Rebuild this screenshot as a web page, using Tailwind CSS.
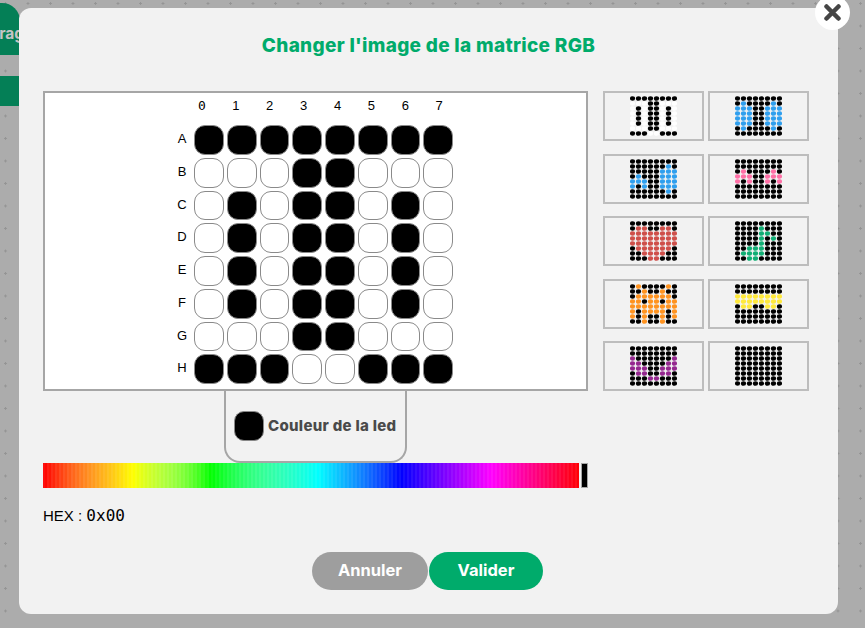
<!doctype html>
<html>

<head>
    <meta charset="UTF-8">
    <meta name="viewport" content="width=device-width, initial-scale=1.0">
    <script src="https://cdn.jsdelivr.net/npm/@tailwindcss/browser@4"></script>
</head>

<body class="font-['Inter',sans-serif]">
    <div class="relative w-[865px] h-[628px] overflow-hidden bg-[#acacac]">
        <!-- workspace dots behind the modal -->
        <svg class="absolute inset-0" width="865" height="628">
            <defs>
                <pattern id="plus" x="4" y="2" width="22.5" height="22.5" patternUnits="userSpaceOnUse">
                    <path d="M0 1.5h3M1.5 0v3" stroke="#949494" stroke-width="1" />
                </pattern>
            </defs>
            <rect width="865" height="628" fill="url(#plus)" />
        </svg>
        <div class="absolute left-[-20px] top-[3px] w-[40px] h-[52px] rounded-t-[18px] bg-[#047f56] text-[#c4c4c4] text-[15.5px] font-bold leading-[62px] pl-[8px]">Drag</div>
        <div class="absolute left-0 top-[76px] w-[30px] h-[30px] bg-[#047f56]"></div>

        <!-- modal -->
        <div class="absolute left-[19px] top-[8px] w-[819px] h-[606px] rounded-xl bg-[#f2f2f2] pl-[24px]">
            <h1 class="h-[83px] pt-[26px] pr-[24px] text-center text-[19px] leading-[24px] font-extrabold tracking-[0.3px] text-[#00ab6b]">Changer l'image de la matrice RGB</h1>

            <div class="flex gap-[15px]">
                <div class="w-[545px]">
                    <div class="h-[300px] border-2 border-[#a6a6a6] bg-white pl-[127px] pt-[3px] font-['Liberation_Sans',sans-serif] text-[13px] text-black">
                        <div id="header" class="flex h-[29px] ml-[13px] leading-[20px]"></div>
                        <div id="matrix" class="grid grid-cols-[19px_repeat(8,29.75px)] gap-[3px]"></div>
                    </div>
                    <div class="ml-[181px] w-[183px] h-[72px] flex items-start gap-[4px] pl-[8px] pt-[20px] border-2 border-t-0 border-[#a6a6a6] rounded-b-[16px]">
                        <div class="w-[30px] h-[30px] rounded-[10px] bg-black border border-[#888]"></div>
                        <span class="text-[15px] leading-[30px] font-extrabold tracking-[0.3px] text-[#4a4a4a] whitespace-nowrap">Couleur de la led</span>
                    </div>
                    <div class="flex h-[25px] gap-[3px]">
                        <div id="spectrum" class="flex w-[536px] h-full"></div>
                        <div class="w-[7px] h-full bg-black border border-[#a6a6a6]"></div>
                    </div>
                    <p class="mt-[18px] text-[15px] leading-[20px] text-black font-['Liberation_Sans',sans-serif]">HEX : <span class="font-['DejaVu_Sans_Mono',monospace] text-[16px]">0x00</span></p>
                </div>

                <div id="thumbs" class="w-[206px] h-[300px] grid grid-cols-[101px_101px] gap-x-[4px] content-between"></div>
            </div>

            <div class="flex justify-center mt-[26px] pr-[26px] gap-[1px]">
                <button class="w-[116px] h-[38px] rounded-full bg-[#9e9e9e] text-white text-[16.5px] font-bold pb-[1px]">Annuler</button>
                <button class="w-[114px] h-[38px] rounded-full bg-[#00ab6b] text-white text-[16.5px] font-bold pb-[1px]">Valider</button>
            </div>
        </div>

        <!-- close button -->
        <div class="absolute left-[815px] top-[-5px] w-[35px] h-[35px] rounded-full bg-white flex items-center justify-center">
            <svg width="17" height="17" viewBox="0 0 17 17">
                <path d="M2.5 2.5l12 12M14.5 2.5l-12 12" stroke="#454545" stroke-width="4.5" stroke-linecap="round" />
            </svg>
        </div>
    </div>

    <script>
        const pattern = ["11111111", "00011000", "01011010", "01011010", "01011010", "01011010", "00011000", "11100111"];

        // column numbers run a bit wider than the leds
        let head = "";
        for (let c = 0; c < 8; c++) {
            head += '<div class="w-[33.9px] text-center' + (c === 0 ? " font-['DejaVu_Sans_Mono',monospace]" : "") + '">' + c + '</div>';
        }
        document.getElementById("header").innerHTML = head;

        // big led matrix
        let html = "";
        "ABCDEFGH".split("").forEach((row, r) => {
            html += '<div class="leading-[28px] text-center pl-[1px]">' + row + '</div>';
            for (let c = 0; c < 8; c++) {
                const on = pattern[r][c] === "1";
                html += '<div class="h-[29.75px] rounded-[11px] border border-[#8a8a8a] ' + (on ? 'bg-black' : 'bg-white') + '"></div>';
            }
        });
        document.getElementById("matrix").innerHTML = html;

        // presets: k black, w white, other letter = preset colour
        const colors = { k: "#000000", w: "#ffffff", b: "#2f9fee", p: "#ff6fa6", r: "#cf4f4a", g: "#10ae74", o: "#ff9320", y: "#ffe93b", v: "#94278f" };
        const presets = [
            ["kkkkkkkk", "wwwkkwww", "wkwkkwkw", "wkwkkwkw", "wkwkkwkw", "wkwkkwkw", "wwwkkwww", "kkkwwkkk"],
            ["kkkkkkkk", "kbkkkkbk", "bbbkkbbb", "bbbkkbbb", "bbbkkbbb", "bbbkkbbb", "kbkkkkbk", "kkkkkkkk"],
            ["kkkkkkkk", "kkkkkkbk", "kkkkkbbb", "kbkkkbbb", "bbbkkbbb", "bkbkkbbb", "kkkkkkbk", "kkkkkkkk"],
            ["kkkkkkkk", "kkkkkkkk", "kpkkkkpk", "pppkkppp", "pkpkkpkp", "kkkkkkkk", "kkkkkkkk", "kkkkkkkk"],
            ["kkkkkkkk", "krrkkrrk", "rrrrrrrr", "rrrrrrrr", "rrrrrrrr", "krrrrrrk", "kkrrrrkk", "kkkrrkkk"],
            ["kkkkkkkk", "kkkkgkkk", "kkkkggkk", "kkkkgkgk", "kkkkgkkk", "kkgggkkk", "kggggkkk", "kkggkkkk"],
            ["kokkkkok", "kkokkokk", "kooooook", "ookookoo", "oooooooo", "okooooko", "okokkoko", "kkokkokk"],
            ["kkkkkkkk", "kkkkkkkk", "yyyyyyyy", "yyyyyyyy", "kyykkyyk", "kkkkkkkk", "kkkkkkkk", "kkkkkkkk"],
            ["kkkkkkkk", "kkkkkkkk", "vkkkkkkv", "vvkkkkvv", "vvvkkvvv", "kvvkkvvk", "kkkvvkkk", "kkkkkkkk"],
            ["kkkkkkkk", "kkkkkkkk", "kkkkkkkk", "kkkkkkkk", "kkkkkkkk", "kkkkkkkk", "kkkkkkkk", "kkkkkkkk"],
        ];

        document.getElementById("thumbs").innerHTML = presets.map(rows => {
            let dots = "";
            rows.forEach((line, y) => {
                for (let x = 0; x < 8; x++) {
                    dots += '<ellipse cx="' + (2.5 + x * 6) + '" cy="' + (2.5 + y * 5) + '" rx="2.6" ry="2.3" fill="' + colors[line[x]] + '"/>';
                }
            });
            return '<div class="h-[50px] flex items-center justify-center border-2 border-[#bdbdbd]"><svg width="47" height="40">' + dots + '</svg></div>';
        }).join("");

        // hue bar, stops read off the reference (pixels from the left of the bar)
        const stops = [0, 89, 167, 274, 357, 447, 536];
        const bump = [6, 12, 10, 3, 0, 0];
        let bars = "";
        for (let i = 0; i < 268; i++) {
            const px = i * 2;
            let s = 0;
            while (s < 5 && px >= stops[s + 1]) s++;
            const part = (px - stops[s]) / (stops[s + 1] - stops[s]);
            const hue = (s + part) * 60;
            const light = 50 + bump[s] * Math.sin(part * Math.PI) + (i % 2 ? 0 : 3);
            bars += '<span class="flex-1 h-full" style="background:hsl(' + hue + ',100%,' + light + '%)"></span>';
        }
        document.getElementById("spectrum").innerHTML = bars;
    </script>
</body>

</html>
